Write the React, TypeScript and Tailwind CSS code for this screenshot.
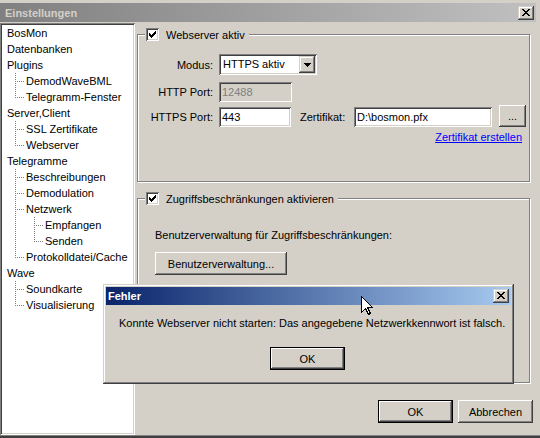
import React from "react";

const FONT = "font-['Liberation_Sans',Arial,sans-serif]";

// Classic 3D edges
const RAISED =
  "shadow-[inset_-1px_-1px_0_#404040,inset_1px_1px_0_#ffffff,inset_-2px_-2px_0_#808080,inset_2px_2px_0_#d4d0c8]";
const CAPTION_BTN =
  "shadow-[inset_-1px_-1px_0_#404040,inset_1px_1px_0_#d4d0c8,inset_-2px_-2px_0_#808080,inset_2px_2px_0_#ffffff]";
const SUNKEN =
  "shadow-[inset_1px_1px_0_#808080,inset_-1px_-1px_0_#ffffff,inset_2px_2px_0_#404040,inset_-2px_-2px_0_#d4d0c8]";
const WINDOW_FRAME =
  "shadow-[inset_-1px_-1px_0_#404040,inset_1px_1px_0_#d4d0c8,inset_-2px_-2px_0_#808080,inset_2px_2px_0_#ffffff]";
const ETCHED =
  "border border-[#808080] shadow-[inset_1px_1px_0_#ffffff,1px_1px_0_#ffffff]";

function Bitmap({ rows, color = "#000" }: { rows: string[]; color?: string }) {
  const w = rows[0].length;
  const h = rows.length;
  return (
    <svg
      width={w}
      height={h}
      viewBox={`0 0 ${w} ${h}`}
      shapeRendering="crispEdges"
      className="block"
    >
      {rows.flatMap((r, y) =>
        r.split("").map((c, x) =>
          c === "X" ? (
            <rect key={`${x}-${y}`} x={x} y={y} width={1} height={1} fill={color} />
          ) : null
        )
      )}
    </svg>
  );
}

const CHECK = [
  "......X",
  ".....XX",
  "X...XXX",
  "XX.XXX.",
  "XXXXX..",
  ".XXX...",
  "..X....",
];

const CLOSE_X = [
  "XX....XX",
  ".XX..XX.",
  "..XXXX..",
  "...XX...",
  "..XXXX..",
  ".XX..XX.",
  "XX....XX",
];

const DOWN = ["XXXXXXX", ".XXXXX.", "..XXX..", "...X..."];

function CaptionClose() {
  return (
    <div className={`w-[16px] h-[14px] bg-[#d4d0c8] pl-[4px] pt-[3px] ${CAPTION_BTN}`}>
      <Bitmap rows={CLOSE_X} />
    </div>
  );
}

function Checkbox() {
  return (
    <div className={`w-[13px] h-[13px] bg-white pl-[3px] pt-[3px] ${SUNKEN}`}>
      <Bitmap rows={CHECK} />
    </div>
  );
}

function PushButton({
  label,
  width,
  isDefault = false,
}: {
  label: string;
  width: string;
  isDefault?: boolean;
}) {
  if (isDefault) {
    return (
      <div className={`${width} h-[23px] border border-black`}>
        <div
          className={`h-full flex items-center justify-center bg-[#d4d0c8] ${RAISED}`}
        >
          {label}
        </div>
      </div>
    );
  }
  return (
    <div
      className={`${width} h-[23px] flex items-center justify-center bg-[#d4d0c8] ${RAISED}`}
    >
      {label}
    </div>
  );
}

type Conn = "pipe" | "tee" | "corner";

const TREE: { label: string; cells: Conn[] }[] = [
  { label: "BosMon", cells: [] },
  { label: "Datenbanken", cells: [] },
  { label: "Plugins", cells: [] },
  { label: "DemodWaveBML", cells: ["tee"] },
  { label: "Telegramm-Fenster", cells: ["corner"] },
  { label: "Server,Client", cells: [] },
  { label: "SSL Zertifikate", cells: ["tee"] },
  { label: "Webserver", cells: ["corner"] },
  { label: "Telegramme", cells: [] },
  { label: "Beschreibungen", cells: ["tee"] },
  { label: "Demodulation", cells: ["tee"] },
  { label: "Netzwerk", cells: ["tee"] },
  { label: "Empfangen", cells: ["pipe", "tee"] },
  { label: "Senden", cells: ["pipe", "corner"] },
  { label: "Protokolldatei/Cache", cells: ["corner"] },
  { label: "Wave", cells: [] },
  { label: "Soundkarte", cells: ["tee"] },
  { label: "Visualisierung", cells: ["corner"] },
];

function TreeLines({ kind }: { kind: Conn }) {
  return (
    <svg width={19} height={16} viewBox="0 0 19 16" className="block shrink-0">
      <line
        x1={8.5}
        y1={0}
        x2={8.5}
        y2={kind === "corner" ? 9 : 16}
        stroke="#808080"
        strokeDasharray="1 1"
      />
      {kind !== "pipe" && (
        <line
          x1={10}
          y1={8.5}
          x2={18}
          y2={8.5}
          stroke="#808080"
          strokeDasharray="1 1"
        />
      )}
    </svg>
  );
}

function Tree() {
  return (
    <div className={`w-[135px] h-full shrink-0 bg-white p-[2px] ${SUNKEN}`}>
      {TREE.map((item) => (
        <div key={item.label} className="flex items-center h-[16px] pl-[5px] whitespace-nowrap">
          {item.cells.map((c, i) => (
            <TreeLines key={i} kind={c} />
          ))}
          <span>{item.label}</span>
        </div>
      ))}
    </div>
  );
}

function Field({
  width,
  value,
  disabled = false,
}: {
  width: string;
  value: string;
  disabled?: boolean;
}) {
  return (
    <div
      className={`${width} h-[20px] flex items-center pl-[3px] ${SUNKEN} ${
        disabled ? "bg-[#d4d0c8] text-[#808080]" : "bg-white"
      }`}
    >
      {value}
    </div>
  );
}

function Legend({ text }: { text: string }) {
  return (
    <div className="absolute left-[7px] top-[-7px] flex items-center h-[13px] pl-[1px] pr-[4px] bg-[#d4d0c8] whitespace-nowrap">
      <Checkbox />
      <span className="ml-[7px]">{text}</span>
    </div>
  );
}

function WebserverGroup() {
  return (
    <div className={`relative mt-[11px] w-[393px] h-[148px] ${ETCHED}`}>
      <Legend text="Webserver aktiv" />
      <div className="pt-[19px]">
        <div className="flex items-center h-[21px]">
          <span className="w-[75px] text-right">Modus:</span>
          <div className={`ml-[6px] w-[98px] h-[21px] flex bg-white p-[2px] ${SUNKEN}`}>
            <span className="flex-1 pl-[2px] leading-[17px]">HTTPS aktiv</span>
            <div
              className={`w-[16px] h-[17px] flex items-center justify-center bg-[#d4d0c8] ${CAPTION_BTN}`}
            >
              <Bitmap rows={DOWN} />
            </div>
          </div>
        </div>
        <div className="flex items-center h-[20px] mt-[7px]">
          <span className="w-[75px] text-right">HTTP Port:</span>
          <div className="ml-[6px]">
            <Field width="w-[73px]" value="12488" disabled />
          </div>
        </div>
        <div className="flex items-end mt-[3px]">
          <span className="w-[75px] h-[20px] leading-[20px] text-right">HTTPS Port:</span>
          <div className="ml-[6px]">
            <Field width="w-[72px]" value="443" />
          </div>
          <span className="ml-[9px] w-[54px] h-[20px] leading-[20px]">Zertifikat:</span>
          <Field width="w-[138px]" value="D:\bosmon.pfx" />
          <div
            className={`ml-[7px] w-[27px] h-[22px] flex items-center justify-center bg-[#d4d0c8] ${RAISED}`}
          >
            ...
          </div>
        </div>
        <div className="flex justify-end pr-[7px] mt-[3px] leading-[14px]">
          <span className="text-[#0000ff] underline">Zertifikat erstellen</span>
        </div>
      </div>
    </div>
  );
}

function AccessGroup() {
  return (
    <div className={`relative mt-[16px] w-[393px] h-[185px] ${ETCHED}`}>
      <Legend text="Zugriffsbeschränkungen aktivieren" />
      <div className="pt-[28px] pl-[17px]">
        <div className="h-[16px]">Benutzerverwaltung für Zugriffsbeschränkungen:</div>
        <div className="mt-[9px]">
          <PushButton label="Benutzerverwaltung..." width="w-[132px]" />
        </div>
      </div>
    </div>
  );
}

function ErrorDialog() {
  return (
    <div
      className={`absolute left-[103px] top-[284px] w-[411px] h-[100px] bg-[#d4d0c8] p-[3px] ${WINDOW_FRAME}`}
    >
      <div className="flex items-center h-[18px] pl-[2px] pr-[2px] bg-[linear-gradient(to_right,#0a246a,#a6caf0)]">
        <span className="font-bold text-white">Fehler</span>
        <div className="ml-auto">
          <CaptionClose />
        </div>
      </div>
      <div className="mt-[11px] pl-[13px] leading-[14px] whitespace-nowrap">
        Konnte Webserver nicht starten: Das angegebene Netzwerkkennwort ist falsch.
      </div>
      <div className="mt-[17px] flex justify-center pr-[2px]">
        <PushButton label="OK" width="w-[75px]" isDefault />
      </div>
    </div>
  );
}

function Pointer() {
  return (
    <svg
      width={13}
      height={20}
      viewBox="0 0 13 20"
      className="absolute left-[361px] top-[296px]"
      shapeRendering="crispEdges"
    >
      <path
        d="M0.5 0.5 L0.5 16.5 L4.5 12.5 L7.5 18.5 L9.5 17.5 L6.5 11.5 L11.5 11.5 Z"
        fill="#ffffff"
        stroke="#000000"
        strokeWidth={1}
      />
    </svg>
  );
}

export default function App() {
  return (
    <div
      className={`relative w-[540px] h-[438px] overflow-hidden bg-[#d4d0c8] text-[11px] leading-[16px] text-black ${FONT}`}
    >
      <div className="flex flex-col h-full pt-[3px]">
        <div className="flex items-center h-[19px] mr-[4px] pl-[5px] pr-[2px] bg-[linear-gradient(to_right,#808080,#c0c0c0)]">
          <span className="font-bold text-[#d4d0c8]">Einstellungen</span>
          <div className="ml-auto">
            <CaptionClose />
          </div>
        </div>
        <div className="flex flex-1 min-h-0 mt-[1px]">
          <Tree />
          <div className="ml-[2px] w-[396px] flex flex-col">
            <WebserverGroup />
            <AccessGroup />
            <div className="mt-[17px] flex justify-end gap-[5px]">
              <PushButton label="OK" width="w-[75px]" isDefault />
              <PushButton label="Abbrechen" width="w-[75px]" />
            </div>
          </div>
        </div>
        <div className="h-[3px] border-t border-[#808080] bg-[#404040]" />
      </div>
      <ErrorDialog />
      <Pointer />
    </div>
  );
}
